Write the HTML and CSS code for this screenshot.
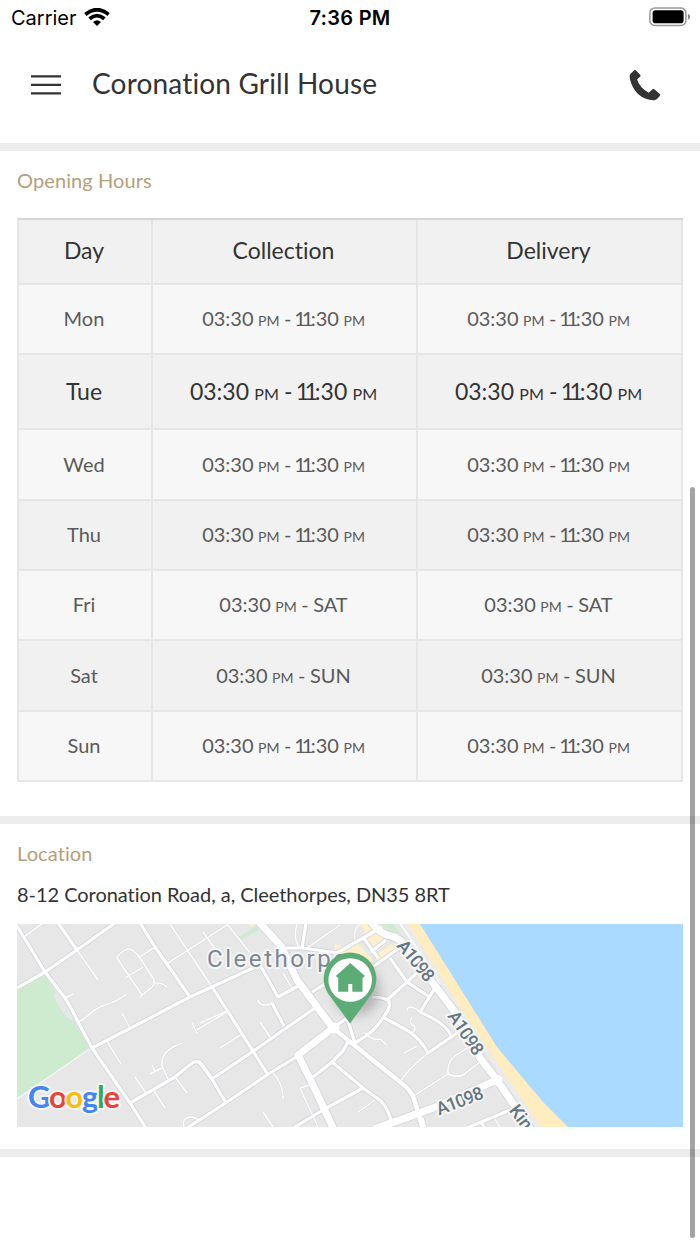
FILE: index.html
```html
<!DOCTYPE html>
<html lang="en">

<head>
    <meta charset="UTF-8">
    <meta name="viewport" content="width=device-width, initial-scale=1.0">
    <title>Coronation Grill House</title>
    <link rel="stylesheet" href="styles.css">
</head>

<body>
    <div class="status-bar">
        <div class="carrier">
            <span>Carrier</span>
            <svg class="wifi" width="26" height="19" viewBox="0 0 26 19">
                <path d="M1.4 6.4 Q13 -3 24.6 6.4" />
                <path d="M5.6 10.8 Q13 4.4 20.4 10.8" />
                <path class="wifi-dot" d="M9 14 Q13 10.6 17 14 L13 18 Z" />
            </svg>
        </div>
        <div class="clock">7:36 PM</div>
        <div class="battery">
            <svg width="42" height="20" viewBox="0 0 42 20">
                <rect x="0.9" y="0.9" width="36" height="17.6" rx="5" fill="none" stroke="#999" stroke-width="1.5" />
                <rect x="3.6" y="3.2" width="31" height="13" rx="2.8" />
                <path d="M38.9 6.8 Q41.1 7.8 41.1 9.8 Q41.1 11.8 38.9 12.8 Z" fill="#888" />
            </svg>
        </div>
    </div>

    <header class="top-nav">
        <svg class="menu" width="30" height="22" viewBox="0 0 30 22">
            <path d="M0 2.4 H30 M0 10.9 H30 M0 19.3 H30" />
        </svg>
        <h1>Coronation Grill House</h1>
        <svg class="phone" width="32" height="32" viewBox="0 0 32 32">
            <path d="M1.3 5 L5.2 1.2 Q6 0.5 6.8 1.3 L11.3 6 Q12 6.8 11.3 7.5 L8.1 10.5 Q10.5 18.5 19.7 23.8 L23.6 20.2 Q24.5 19.4 25.4 20.2 L30.8 25 Q31.7 25.9 31 26.8 L28 30.1 Q26.8 31.3 24.8 31.2 Q6 30.2 0.9 10 Q0.2 6.2 1.3 5 Z" />
        </svg>
    </header>

    <section class="opening-hours">
        <h2>Opening Hours</h2>
        <table class="hours-table">
            <tr class="head">
                <th class="day">Day</th>
                <th>Collection</th>
                <th>Delivery</th>
            </tr>
            <tr>
                <td>Mon</td>
                <td>03:30 <small>PM</small> - <span class="ones">11</span>:30 <small>PM</small></td>
                <td>03:30 <small>PM</small> - <span class="ones">11</span>:30 <small>PM</small></td>
            </tr>
            <tr class="today">
                <td>Tue</td>
                <td>03:30 <small>PM</small> - <span class="ones">11</span>:30 <small>PM</small></td>
                <td>03:30 <small>PM</small> - <span class="ones">11</span>:30 <small>PM</small></td>
            </tr>
            <tr class="tall">
                <td>Wed</td>
                <td>03:30 <small>PM</small> - <span class="ones">11</span>:30 <small>PM</small></td>
                <td>03:30 <small>PM</small> - <span class="ones">11</span>:30 <small>PM</small></td>
            </tr>
            <tr>
                <td>Thu</td>
                <td>03:30 <small>PM</small> - <span class="ones">11</span>:30 <small>PM</small></td>
                <td>03:30 <small>PM</small> - <span class="ones">11</span>:30 <small>PM</small></td>
            </tr>
            <tr>
                <td>Fri</td>
                <td>03:30 <small>PM</small> - SAT</td>
                <td>03:30 <small>PM</small> - SAT</td>
            </tr>
            <tr class="tall">
                <td>Sat</td>
                <td>03:30 <small>PM</small> - SUN</td>
                <td>03:30 <small>PM</small> - SUN</td>
            </tr>
            <tr>
                <td>Sun</td>
                <td>03:30 <small>PM</small> - <span class="ones">11</span>:30 <small>PM</small></td>
                <td>03:30 <small>PM</small> - <span class="ones">11</span>:30 <small>PM</small></td>
            </tr>
        </table>
    </section>

    <section class="location">
        <h2>Location</h2>
        <p class="address">8-12 Coronation Road, a, Cleethorpes, DN35 8RT</p>
        <svg class="map" width="666" height="203" viewBox="17 924 666 203">
            <defs>
                <g id="lanes">
                    <path d="M25 936 L42 924 M77 950 L98 980" />
                    <path d="M142 995 L125 970 L117 958 Q116 955 127 949 Q133 948 140 958 L153 978 Q156 983 152 987 L139 998 M154 983 Q162 982 167 987" />
                    <path d="M125 978 L143 967 M138 958 L155 947 M65 998 L73 994" />
                    <path d="M78 1022 Q85 1019 92 1012 Q100 1006 108 1004 Q115 1002 127 994" />
                    <path d="M122 1013 L130 1028 M107 1041 L121 1064 M192 1023 L197 1033 M195 1031 L227 1012 M220 1048 L242 1034" />
                    <path d="M183 1043 Q160 1050 162 1066 L168 1079 M150 1074 L162 1068 M152 1065 L155 1072" />
                    <path d="M135 1077 L146 1093 M154 1091 L165 1108 M175 1077 L187 1093 M184 1127 Q181 1119 190 1117 Q196 1117 199 1121" />
                    <path d="M170 924 L212 987 M168 963 L227 925 M203 932 L218 953 M227 924 L260 965 M200 1023 L227 1011" />
                    <path d="M283 973 L292 988 M258 1000 Q260 1008 272 1003 M260 1022 L270 1037 M273 1073 Q283 1083 283 1099 M263 1112 L273 1127" />
                    <path d="M307 948 L340 925 M297 924 Q293 937 299 948 M313 1084 L300 1088 L318 1127 M358 1112 L375 1100" />
                    <path d="M365 1033 Q372 1041 380 1039 L387 1045 M355 940 Q353 929 360 924" />
                    <path d="M400 1082 Q408 1069 428 1053 M415 1095 L448 1074 Q457 1078 463 1075 L480 1062 M448 1074 Q447 1062 455 1056 L467 1048" />
                    <path d="M407 1010 Q409 1003 420 1012 M412 1017 Q408 1023 414 1026 Q417 1030 411 1034 M404 1053 L417 1046 M495 1119 L500 1127" />
                </g>
                <g id="streets">
                    <path d="M17 926 L45 972 L65 998 Q71 1007 78 1022 L92 1048 L130 1103 L146 1128" />
                    <path d="M17 988 L45 972 L77 950 L115 923 M58 923 L77 950" />
                    <path d="M92 1048 L127 1030 L190 997 L260 965 M140 923 L155 947 L190 997" />
                    <path d="M212 987 L227 1010 L268 1075 M130 1103 L175 1077 L192 1063 Q198 1059 203 1066 L212 1079 L226 1103" />
                    <path d="M187 1128 L227 1102 L270 1073 L298 1056" />
                    <path d="M200 1063 L212 1079 L252 1052 L315 1008" />
                    <path d="M260 965 L278 997 L300 985 M272 1003 L284 1026 M282 948 L303 948 L337 953 L363 938 L382 927 M306 923 L302 948" />
                    <path d="M312 992 L345 972 M347 1018 L355 1043 M333 1028 L347 1018" />
                    <path d="M355 1043 Q375 1032 385 1015 Q393 1003 387 1000 Q382 997 372 997 M388 999 L407 982 L422 968" />
                    <path d="M348 1042 L343 1051 L332 1062 L313 1077 M332 1062 L363 1088 L381 1101 Q389 1110 392 1124" />
                    <path d="M363 1088 L323 1110 L293 1128 M383 1017 L410 1032 Q421 1040 428 1053 L457 1033" />
                    <path d="M390 958 L407 982 L428 996 M435 988 L420 1012 Q448 1024 452 1038" />
                    <path d="M363 937 L378 958 M386 940 L371 952 M374 966 L402 946 M467 1128 L510 1110 M422 1118 L425 1128 M481 1122 L485 1128" />
                </g>
                <g id="mains">
                    <path d="M259 922 L281 946 L297 980 L333 1028 L298 1055 L313 1085 L334 1130" />
                    <path d="M371 922 Q380 934 391 936 Q402 938 415 958 L433 983 L455 1012 L480 1058 L497 1080 L531 1130" />
                    <path d="M497 1080 L433 1108 L400 1120 L374 1129" />
                </g>
                <path id="diagonal" d="M333 1028 L400 1082 Q411 1090 414 1099 L423 1129" />
                <filter id="pinShadow" x="-50%" y="-30%" width="200%" height="160%">
                    <feGaussianBlur stdDeviation="6" />
                </filter>
            </defs>

            <rect x="17" y="924" width="666" height="203" fill="#e7e7e7" />
            <!-- park, greens and shopping blocks -->
            <path d="M17 990 L44 974 L56 992 L54 995 Q60 1014 73 1021 L91 1048 L17 1098 Z" fill="#ceebd0" />
            <path d="M91 1048 L17 1099" class="footpath" />
            <path d="M239 937 L257 926 L259 930 L240 940 Z M381 924 L393 924 L408 944 L398 938 Z" fill="#ceebd0" />
            <path d="M360 924 L372 924 L378 930 L367 935 Z M366 938 L378 932 L389 942 L376 952 Z M335 944 L344 948 L358 943 L364 950 L374 962 L345 965 L334 956 Z M375 956 L391 944 L396 950 L378 963 Z M248 924 L254 924 L252 927 Z" fill="#fdf0cb" />

            <!-- seafront -->
            <path d="M400 924 L683 924 L683 1127 L535 1127 Z" fill="#ebebeb" />
            <path d="M408 924 L683 924 L683 1127 L541 1127 L467 1018 Z" fill="#ffecbf" />
            <path d="M420 924 L683 924 L683 1127 L568 1127 L543 1102 L497 1047 Z" fill="#aadaff" />
            <path d="M400 924 Q412 940 437 979 Q441 985 437 990" class="promenade" />

            <use href="#lanes" class="lane-edge" />
            <use href="#streets" class="street-edge" />
            <use href="#diagonal" class="diagonal-edge" />
            <use href="#mains" class="main-edge" />
            <use href="#lanes" class="lane" />
            <use href="#streets" class="street" />
            <use href="#diagonal" class="diagonal" />
            <use href="#mains" class="main" />
            <circle cx="497" cy="1080" r="5.5" fill="#fff" />
            <circle cx="334" cy="1028" r="5.5" fill="#fff" />

            <text class="place" x="207" y="967" textLength="139">Cleethorpe</text>
            <text class="road" transform="translate(396 946) rotate(51)" textLength="48">A1098</text>
            <text class="road" transform="translate(447 1016) rotate(56)" textLength="49">A1098</text>
            <text class="road" transform="translate(439 1115.5) rotate(-21)" textLength="49">A1098</text>
            <text class="road" transform="translate(508.5 1110.5) rotate(53)">Kin</text>

            <!-- marker -->
            <ellipse cx="357" cy="990" rx="23" ry="25" fill="#000" opacity="0.22" filter="url(#pinShadow)" />
            <path d="M350 1023.5 L328.5 994 A26.3 26.3 0 1 1 371.5 994 Z" fill="#5cad75" />
            <circle cx="350.2" cy="980" r="21.8" fill="#fff" />
            <path d="M350.3 963 L365 976 L362.5 978 L362.5 991.7 L352.3 991.7 L352.3 984 L348.3 984 L348.3 991.7 L338.2 991.7 L338.2 978 L335.8 976 Z" fill="#5cad75" />

            <text class="google" x="28" y="1108" textLength="92"><tspan fill="#4285f4">G</tspan><tspan fill="#ea4335">o</tspan><tspan fill="#fbbc04">o</tspan><tspan fill="#4285f4">g</tspan><tspan fill="#34a853">l</tspan><tspan fill="#ea4335">e</tspan></text>
        </svg>
    </section>

    <div class="scrollbar"></div>
</body>

</html>
```
FILE: styles.css
```css
* {
    margin: 0;
    padding: 0;
    box-sizing: border-box;
}

body {
    position: relative;
    height: 1244px;
    overflow: hidden;
    background-color: #fff;
    color: #333;
    font-family: Lato, sans-serif;
    font-variant-ligatures: none;
}

.status-bar {
    display: grid;
    grid-template-columns: 1fr auto 1fr;
    align-items: center;
    height: 36px;
    padding: 0 9px 0 11px;
    color: #000;
    font-family: Inter, sans-serif;
    font-size: 20px;
}

.carrier {
    display: flex;
    align-items: center;
    gap: 7px;
}

.wifi {
    margin-top: -1px;
    fill: none;
    stroke: #000;
    stroke-width: 3.8;
}

.wifi-dot {
    fill: #000;
    stroke: none;
}

.clock {
    padding-right: 2px;
    font-weight: 600;
    letter-spacing: 0.3px;
}

.battery {
    display: flex;
    justify-content: flex-end;
    margin-top: -2px;
}

.top-nav {
    display: flex;
    align-items: center;
    height: 107px;
    padding: 0 39px 10px 31px;
}

.menu {
    margin-right: 31px;
    fill: none;
    stroke: #333;
    stroke-width: 2.2;
}

.top-nav h1 {
    flex-grow: 1;
    padding-bottom: 4px;
    font-size: 28px;
    font-weight: 400;
    letter-spacing: 0.17px;
}

.phone {
    fill: #333;
}

section {
    border-top: 8px solid #ededed;
    padding: 0 17px;
}

section h2 {
    height: 67px;
    line-height: 58px;
    color: #b3a07c;
    font-size: 20px;
    font-weight: 400;
    letter-spacing: 0.1px;
}

.opening-hours {
    height: 673px;
}

.hours-table {
    width: 666px;
    table-layout: fixed;
    border-collapse: separate;
    border-spacing: 0;
    border-top: 2px solid #d6d6d6;
    border-left: 2px solid #e6e6e6;
    text-align: center;
}

.hours-table th,
.hours-table td {
    padding: 0 2px 2px 0;
    border-right: 2px solid #e6e6e6;
    border-bottom: 2px solid #e6e6e6;
}

.hours-table tr {
    height: 70px;
    background-color: #f7f7f7;
    color: #5a5a5a;
    font-size: 20px;
}

.hours-table tr:nth-child(odd) {
    background-color: #f1f1f1;
}

.hours-table tr.tall {
    height: 71px;
}

.hours-table tr.head {
    height: 65px;
    color: #333;
    font-size: 23px;
}

.hours-table tr.today {
    height: 75px;
    color: #333;
    font-size: 23px;
}

.hours-table th {
    padding-bottom: 3px;
    font-weight: 400;
}

.hours-table .day {
    width: 134px;
}

.hours-table td {
    word-spacing: -0.03em;
}

.hours-table small {
    font-size: 70%;
}

/* tabular ones sit too far apart */
.hours-table .ones {
    margin-right: 0.07em;
    margin-left: -0.09em;
    letter-spacing: -0.2em;
}

.location {
    height: 341px;
    border-bottom: 8px solid #ededed;
}

.location h2 {
    height: 56px;
}

.address {
    height: 44px;
    line-height: 29px;
    font-size: 20px;
    letter-spacing: -0.04px;
}

.map {
    display: block;
}

.map use {
    fill: none;
    stroke: #fff;
    stroke-linejoin: round;
}

.map .lane-edge {
    stroke: #dcdee1;
    stroke-width: 2.4;
}

.map .lane {
    stroke-width: 1.4;
}

.map .street-edge {
    stroke: #d3d6da;
    stroke-width: 5;
}

.map .street {
    stroke-width: 3.2;
}

.map .diagonal-edge {
    stroke: #d3d6da;
    stroke-width: 6.4;
}

.map .diagonal {
    stroke-width: 4.6;
}

.map .main-edge {
    stroke: #d3d6da;
    stroke-width: 9;
}

.map .main {
    stroke-width: 7.2;
}

.footpath,
.promenade {
    fill: none;
    stroke: #f4f4f4;
    stroke-width: 1.5;
}

.promenade {
    stroke: #fff;
}

.map text {
    paint-order: stroke;
    stroke: #f5f5f5;
    stroke-width: 4px;
    stroke-linejoin: round;
}

.place {
    fill: #7c8794;
    font-family: Roboto, sans-serif;
    font-size: 24px;
}

.road {
    fill: #66757f;
    font-family: Roboto, sans-serif;
    font-size: 18px;
    font-weight: 500;
}

.google {
    font-size: 31px;
    font-weight: 700;
}

/* thin overlay thumb on the right edge */
.scrollbar {
    position: absolute;
    top: 487px;
    right: 5px;
    width: 5px;
    height: 751px;
    border-radius: 3px;
    background-color: rgba(0, 0, 0, 0.36);
}
```
